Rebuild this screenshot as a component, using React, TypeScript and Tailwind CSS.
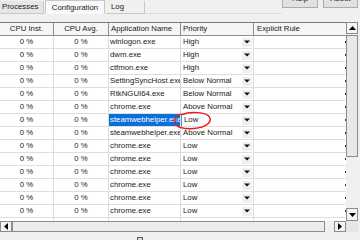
import React from "react"

type Row = { app: string; priority: string; selected?: boolean; empty?: boolean }

const rows: Row[] = [
  { app: "winlogon.exe", priority: "High" },
  { app: "dwm.exe", priority: "High" },
  { app: "ctfmon.exe", priority: "High" },
  { app: "SettingSyncHost.exe", priority: "Below Normal" },
  { app: "RtkNGUI64.exe", priority: "Below Normal" },
  { app: "chrome.exe", priority: "Above Normal" },
  { app: "steamwebhelper.exe", priority: "Low", selected: true },
  { app: "steamwebhelper.exe", priority: "Above Normal" },
  { app: "chrome.exe", priority: "Low" },
  { app: "chrome.exe", priority: "Low" },
  { app: "chrome.exe", priority: "Low" },
  { app: "chrome.exe", priority: "Low" },
  { app: "chrome.exe", priority: "Low" },
  { app: "chrome.exe", priority: "Low" },
  { app: "", priority: "", empty: true },
]

const cols = "grid grid-cols-[54px_55px_72px_73px_120px]"

const Arrow = ({ dir }: { dir: "up" | "down" | "left" | "right" }) => {
  const pts = {
    up: "0,4 7,4 3.5,0",
    down: "0,0 7,0 3.5,4",
    left: "4,0 4,7 0,3.5",
    right: "0,0 0,7 4,3.5",
  }[dir]
  const w = dir === "up" || dir === "down" ? 7 : 4
  const h = dir === "up" || dir === "down" ? 4 : 7
  return (
    <svg width={w} height={h} viewBox={`0 0 ${w} ${h}`}>
      <polygon points={pts} fill="#000" />
    </svg>
  )
}

const DropArrow = () => (
  <div className="w-[10px] h-[9px] bg-[#f0f0f0] flex items-center justify-center">
    <svg width="6" height="4" viewBox="0 0 6 4">
      <polygon points="0,0.5 6,0.5 3,3.5" fill="#111" />
    </svg>
  </div>
)

const ScrollBtn = ({ dir, className = "" }: { dir: "up" | "down" | "left" | "right"; className?: string }) => (
  <div className={`border border-[#8c8c8c] bg-[#f4f4f4] flex items-center justify-center ${className}`}>
    <Arrow dir={dir} />
  </div>
)

export default function App() {
  return (
    <div className="w-[360px] h-[240px] overflow-hidden bg-[#f0f0f0] text-[#1a1a1a] text-[7.8px] leading-none" style={{ fontFamily: '"Liberation Sans", Arial, sans-serif' }}>
      {/* tabs + buttons */}
      <div className="h-[14px] flex items-stretch">
        <div className="w-[44px] mt-[1px] bg-[#e6e6e6] border-r border-b border-[#c8c8c8] flex items-center pl-[2px]">Processes</div>
        <div className="w-[60px] ml-[1px] bg-[#fafafa] border-x border-t border-[#c8c8c8] flex items-center justify-center">Configuration</div>
        <div className="w-[39px] ml-[1px] mt-[1px] bg-[#f0f0f0] border-r border-b border-[#c8c8c8] flex items-center pl-[5px]">Log</div>
        <div className="flex-1 border-b border-[#dcdcdc]" />
        <div className="h-[9px] overflow-hidden flex gap-[5px] pr-[2px] self-start">
          <div className="w-[36px] h-[18px] -mt-[10px] bg-[#e1e1e1] border border-[#adadad] flex items-center justify-center">Help</div>
          <div className="w-[35px] h-[18px] -mt-[10px] bg-[#e1e1e1] border border-[#adadad] flex items-center justify-center">About</div>
        </div>
      </div>

      <div className="mt-[8px] flex">
        {/* list view */}
        <div className="w-[346px] h-[199px] overflow-hidden bg-white relative">
          <div className={`${cols} h-[14px] bg-[#f5f5f5] border-t border-[#7a7a7a]`}>
            <div className="border-r border-b border-[#8f8f8f] flex items-center justify-center">CPU Inst.</div>
            <div className="border-r border-b border-[#8f8f8f] flex items-center justify-center">CPU Avg.</div>
            <div className="border-r border-b border-[#8f8f8f] flex items-center pl-[2px]">Application Name</div>
            <div className="border-r border-b border-[#8f8f8f] flex items-center pl-[2px]">Priority</div>
            <div className="border-r border-b border-[#8f8f8f] flex items-center pl-[3px]">Explicit Rule</div>
          </div>
          {rows.map((r, i) => (
            <div key={i} className={`${cols} h-[13px] border-b border-[#dedede]`}>
              <div className="border-r border-[#dcdcdc] flex items-center justify-center">{r.empty ? "" : "0 %"}</div>
              <div className="border-r border-[#dcdcdc] flex items-center justify-center">{r.empty ? "" : "0 %"}</div>
              <div className={`border-r border-[#dcdcdc] flex items-center pl-[1px] overflow-hidden whitespace-nowrap ${r.selected ? "bg-[#0a6fd8] text-white" : ""}`}>{r.app}</div>
              <div className={`border-r border-[#dcdcdc] flex items-center justify-between pl-[2px] pr-[1px] ${r.selected ? "border-l border-l-[#4a8ee0]" : ""}`}>
                <span>{r.priority}</span>
                {!r.empty && <DropArrow />}
              </div>
              <div className="flex items-center justify-end pr-[28px]">
                {!r.empty && <div className="w-[1px] h-[2px] bg-[#333]" />}
              </div>
            </div>
          ))}
          {/* red hand-drawn circle */}
          <svg className="absolute left-[170px] top-[89px]" width="44" height="22" viewBox="0 0 44 22">
            <path d="M12 3.5 C20 0.5 36 0.8 39.5 6 C42.5 11 36 16.5 24 17.5 C13 18.3 5.5 16 5 11 C4.6 7.5 7 4.6 10.5 3.2" fill="none" stroke="#e8191a" strokeWidth="1.4" strokeLinecap="round" />
          </svg>
        </div>
        {/* vertical scrollbar */}
        <div className="w-[12px] h-[199px] bg-[#f0f0f0] flex flex-col">
          <ScrollBtn dir="up" className="h-[12px]" />
          <div className="mt-[1px] h-[122px] border border-[#8c8c8c] bg-[#e8e8e8]" />
          <div className="flex-1" />
          <ScrollBtn dir="down" className="h-[13px]" />
        </div>
      </div>

      {/* horizontal scrollbar */}
      <div className="flex h-[11px]">
        <div className="w-[346px] flex bg-[#f0f0f0]">
          <ScrollBtn dir="left" className="w-[12px]" />
          <div className="w-[313px] border border-[#8c8c8c] bg-[#ececec]" />
          <div className="flex-1" />
          <ScrollBtn dir="right" className="w-[12px]" />
        </div>
        <div className="w-[12px] bg-[#e6e6e6]" />
      </div>

      <div className="flex justify-center pt-[5px] pr-[80px]">
        <div className="w-[6px] h-[4px] border-t border-x border-[#555] bg-[#dcdcdc]" />
      </div>
    </div>
  )
}
